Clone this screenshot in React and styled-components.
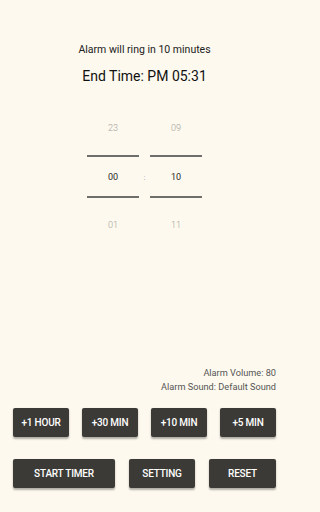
import React from "react";
import styled, { createGlobalStyle } from "styled-components";

const Global = createGlobalStyle`
  html, body { margin: 0; padding: 0; background: #fdf9ee; }
  * { box-sizing: border-box; }
`;

const Page = styled.div`
  width: 289px;
  height: 512px;
  background: #fdf9ee;
  display: flex;
  flex-direction: column;
  align-items: center;
  font-family: Roboto, "Noto Sans", sans-serif;
  color: #222;
  overflow: hidden;
`;

const Message = styled.div`
  margin-top: 43px;
  font-size: 10.5px;
  line-height: 14px;
  color: #222;
`;

const EndTime = styled.div`
  margin-top: 10px;
  font-size: 14px;
  line-height: 18px;
  color: #111;
`;

const Picker = styled.div`
  margin-top: 23px;
  display: flex;
  align-items: stretch;
`;

const Column = styled.div`
  width: 52px;
  display: flex;
  flex-direction: column;
  align-items: stretch;
`;

const Cell = styled.div`
  height: ${(p) => (p.$mid ? 39 : 40)}px;
  margin-top: ${(p) => (p.$gap ? 7 : 0)}px;
  margin-bottom: ${(p) => (p.$gapBottom ? 7 : 0)}px;
  display: flex;
  align-items: center;
  justify-content: center;
  font-size: 9px;
  font-weight: ${(p) => (p.$mid ? 400 : 300)};
  color: ${(p) => (p.$mid ? "#2a2a2a" : "#a3a29d")};
`;

const Divider = styled.div`
  height: 2px;
  background: #6e6e6a;
`;

const Colon = styled.div`
  width: 11px;
  display: flex;
  align-items: center;
  justify-content: center;
  font-size: 8px;
  color: #999;
  padding-top: 2px;
`;

const Info = styled.div`
  margin-top: 121px;
  align-self: stretch;
  padding-right: 13px;
  text-align: right;
  font-size: 9.2px;
  line-height: 14px;
  color: #555;
`;

const Row = styled.div`
  align-self: stretch;
  margin-top: ${(p) => p.$top}px;
  padding: 0 13px;
  display: flex;
  justify-content: space-between;
`;

const Button = styled.button`
  width: ${(p) => p.$w}px;
  height: 29px;
  border: none;
  border-radius: 2px;
  background: #3b3a36;
  color: #fff;
  font-family: Roboto, "Noto Sans", sans-serif;
  font-weight: 500;
  font-size: 10px;
  letter-spacing: -0.2px;
  box-shadow: 0 1.5px 2px rgba(0, 0, 0, 0.3);
  padding: 0;
  cursor: pointer;
`;

export default function App() {
  return (
    <>
      <Global />
      <Page>
        <Message>Alarm will ring in 10 minutes</Message>
        <EndTime>End Time: PM 05:31</EndTime>
        <Picker>
          <Column>
            <Cell $gapBottom>23</Cell>
            <Divider />
            <Cell $mid>00</Cell>
            <Divider />
            <Cell $gap>01</Cell>
          </Column>
          <Colon>:</Colon>
          <Column>
            <Cell $gapBottom>09</Cell>
            <Divider />
            <Cell $mid>10</Cell>
            <Divider />
            <Cell $gap>11</Cell>
          </Column>
        </Picker>
        <Info>
          <div>Alarm Volume: 80</div>
          <div>Alarm Sound: Default Sound</div>
        </Info>
        <Row $top={14}>
          <Button $w={56}>+1 HOUR</Button>
          <Button $w={56}>+30 MIN</Button>
          <Button $w={56}>+10 MIN</Button>
          <Button $w={56}>+5 MIN</Button>
        </Row>
        <Row $top={22}>
          <Button $w={102}>START TIMER</Button>
          <Button $w={66}>SETTING</Button>
          <Button $w={67}>RESET</Button>
        </Row>
      </Page>
    </>
  );
}
